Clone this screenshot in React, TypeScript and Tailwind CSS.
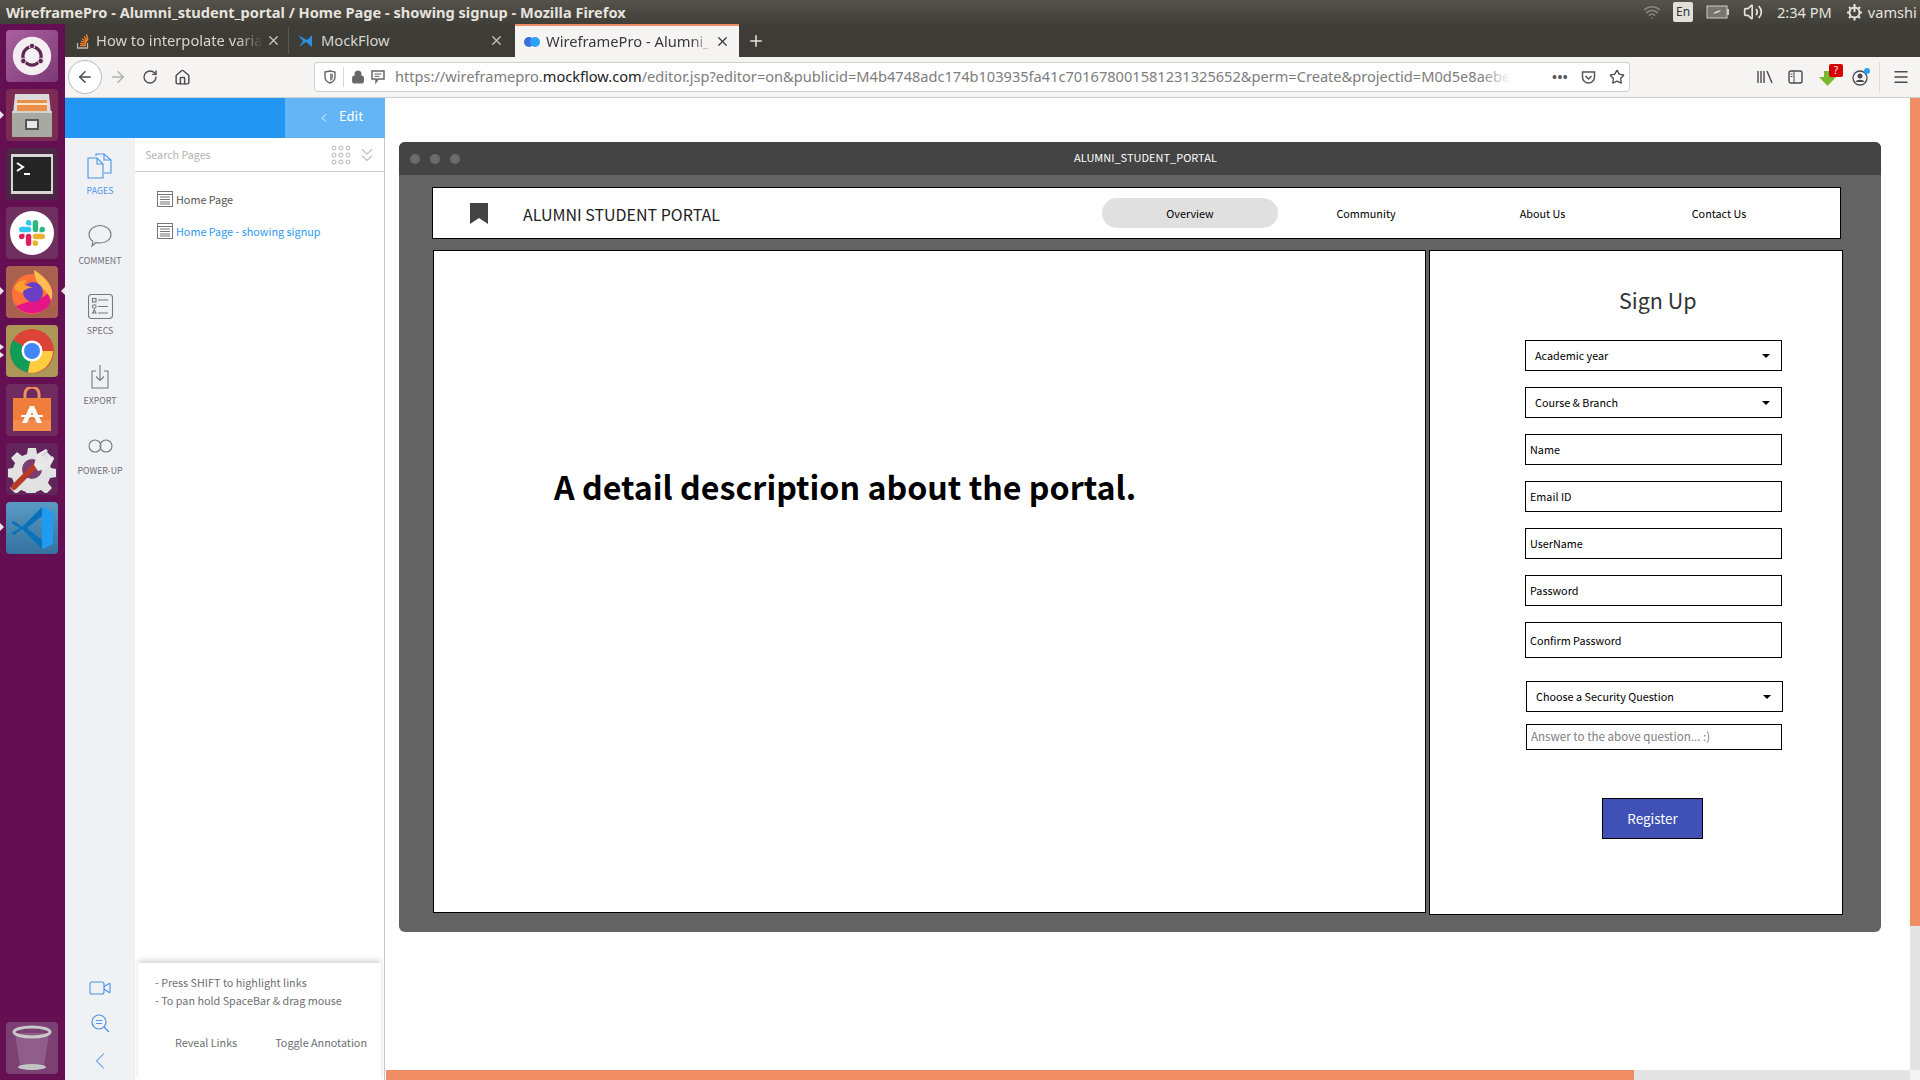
import React from 'react';
import { ArrowLeft, ArrowRight, RotateCw, Home, Lock, Star, Menu, ChevronLeft, Video, Wifi, Volume2, X, Plus, ChevronsDown } from 'lucide-react';

const Tile = ({ bg, children }: { bg: string; children: React.ReactNode }) => (
  <div className={`w-[52px] h-[52px] rounded-[4px] flex items-center justify-center ${bg}`}>{children}</div>
);

const Launcher = () => (
  <div className="relative w-[65px] shrink-0 bg-[#640f52] flex flex-col items-start pl-[6px] pt-[6px] gap-[7px]">
    <Tile bg="bg-gradient-to-br from-[#a9619f] to-[#7d3a76]">
      <svg width="42" height="42" viewBox="0 0 46 46">
        <circle cx="23" cy="23" r="21" fill="#f4eef3" />
        <circle cx="23" cy="23" r="10" fill="none" stroke="#5e2750" strokeWidth="3.5" />
        <circle cx="23" cy="12" r="3" fill="#5e2750" stroke="#f4eef3" />
        <circle cx="13.5" cy="28.5" r="3" fill="#5e2750" stroke="#f4eef3" />
        <circle cx="32.5" cy="28.5" r="3" fill="#5e2750" stroke="#f4eef3" />
      </svg>
    </Tile>
    <Tile bg="bg-[#7c2c50]">
      <svg width="42" height="46" viewBox="0 0 42 46">
        <path d="M4 2h34l2 20H2z" fill="#dadada" />
        <rect x="6" y="8" width="30" height="11" fill="#e98f4a" />
        <rect x="6" y="11" width="30" height="2" fill="#fbe6c8" />
        <rect x="1" y="19" width="40" height="26" rx="1" fill="#a9a9a4" />
        <rect x="1" y="19" width="40" height="2" fill="#d4d4d0" />
        <rect x="15" y="28" width="12" height="9" fill="#e6e6e6" stroke="#555" strokeWidth="2" />
      </svg>
    </Tile>
    <Tile bg="bg-[#4c2645]">
      <svg width="46" height="44" viewBox="0 0 46 44">
        <rect x="2" y="2" width="42" height="40" fill="#d6d6d2" />
        <rect x="4" y="5" width="38" height="34" fill="#242424" />
        <path d="M8 11l6 4-6 4" fill="none" stroke="#fff" strokeWidth="2" />
        <rect x="15" y="21" width="6" height="2" fill="#fff" />
      </svg>
    </Tile>
    <Tile bg="bg-[#70305f]">
      <svg width="46" height="46" viewBox="0 0 46 46">
        <circle cx="23" cy="23" r="22" fill="#fff" />
        <svg x="10" y="10" width="26" height="26" viewBox="0 0 24 24">
          <path fill="#e01e5a" d="M5.042 15.165a2.528 2.528 0 0 1-2.52 2.523A2.528 2.528 0 0 1 0 15.165a2.527 2.527 0 0 1 2.522-2.52h2.52v2.52zM6.313 15.165a2.527 2.527 0 0 1 2.521-2.52 2.527 2.527 0 0 1 2.521 2.52v6.313A2.528 2.528 0 0 1 8.834 24a2.528 2.528 0 0 1-2.521-2.522v-6.313z" />
          <path fill="#36c5f0" d="M8.834 5.042a2.528 2.528 0 0 1-2.521-2.52A2.528 2.528 0 0 1 8.834 0a2.528 2.528 0 0 1 2.521 2.522v2.52H8.834zM8.834 6.313a2.528 2.528 0 0 1 2.521 2.521 2.528 2.528 0 0 1-2.521 2.521H2.522A2.528 2.528 0 0 1 0 8.834a2.528 2.528 0 0 1 2.522-2.521h6.312z" />
          <path fill="#2eb67d" d="M18.956 8.834a2.528 2.528 0 0 1 2.522-2.521A2.528 2.528 0 0 1 24 8.834a2.528 2.528 0 0 1-2.522 2.521h-2.522V8.834zM17.688 8.834a2.528 2.528 0 0 1-2.523 2.521 2.527 2.527 0 0 1-2.52-2.521V2.522A2.527 2.527 0 0 1 15.165 0a2.528 2.528 0 0 1 2.523 2.522v6.312z" />
          <path fill="#ecb22e" d="M15.165 18.956a2.528 2.528 0 0 1 2.523 2.522A2.528 2.528 0 0 1 15.165 24a2.527 2.527 0 0 1-2.52-2.522v-2.522h2.52zM15.165 17.688a2.527 2.527 0 0 1-2.52-2.523 2.526 2.526 0 0 1 2.52-2.52h6.313A2.527 2.527 0 0 1 24 15.165a2.528 2.528 0 0 1-2.522 2.523h-6.313z" />
        </svg>
      </svg>
    </Tile>
    <Tile bg="bg-[#a9604f]">
      <svg width="48" height="48" viewBox="0 0 48 48">
        <circle cx="24" cy="26" r="20" fill="#ff7139" />
        <path d="M8 38c8 10 26 10 33-1 3-5 5-12 3-19-3 9-9 12-16 13z" fill="#e31587" />
        <path d="M26 2c5 3 14 9 18 20 1 4 0 8-1 11-2-9-9-12-13-17-2-4-4-9-4-14z" fill="#ffbd4f" />
        <circle cx="25" cy="24" r="10" fill="#6a3fc4" />
        <path d="M6 20c3-6 8-8 13-8-2 2-3 3-3 5 3 1 6 1 8 3-5 0-8 2-10 5-3-1-6-2-8-5z" fill="#ff9f2e" />
      </svg>
    </Tile>
    <Tile bg="bg-[#ad9757]">
      <svg width="46" height="46" viewBox="0 0 46 46">
        <circle cx="23" cy="23" r="22" fill="#db4437" />
        <path d="M23 23L4 12A22 22 0 0 0 19 44.6z" fill="#0f9d58" />
        <path d="M23 23h21A22 22 0 0 1 19 44.6L23 23z" fill="#ffcd40" />
        <circle cx="23" cy="23" r="10.5" fill="#fff" />
        <circle cx="23" cy="23" r="8" fill="#4285f4" />
      </svg>
    </Tile>
    <Tile bg="bg-[#6f2b60]">
      <svg width="42" height="46" viewBox="0 0 42 46">
        <path d="M14 12V7a5 5 0 0 1 14 0v5" fill="none" stroke="#f0905a" strokeWidth="3" />
        <rect x="2" y="11" width="38" height="33" fill="#ef7e3a" />
        <path d="M2 33h38v11H2z" fill="#f28b4c" />
        <path d="M19 19h4l8 17h-5l-5-11-5 11h-5z" fill="#fff" />
        <rect x="10" y="28" width="22" height="2" fill="#fff" />
      </svg>
    </Tile>
    <Tile bg="bg-[#63245b]">
      <svg width="48" height="48" viewBox="0 0 48 48">
        <path d="M20 3h8l1 6 5 2 5-4 6 6-4 5 2 5 5 1v8l-6 1-2 5 4 5-6 6-5-4-5 2-1 6h-8l-1-6-5-2-5 4-6-6 4-5-2-5-5-1v-8l6-1 2-5-4-5 6-6 5 4 5-2z" fill="#e2e2e2" />
        <circle cx="24" cy="24" r="10" fill="#7c3d72" />
        <path d="M6 42l24-24" stroke="#b53a28" strokeWidth="6" strokeLinecap="round" />
        <path d="M26 20l3-11 9-5 2 2-6 5 1 4 4 1 6-5 1 3-5 9-11 3z" fill="#e8e8e8" />
      </svg>
    </Tile>
    <Tile bg="bg-gradient-to-b from-[#5a9ac4] to-[#35729f]">
      <svg width="44" height="46" viewBox="0 0 44 46">
        <path d="M32 2l11 5v32l-11 5z" fill="#1f9cf0" />
        <path d="M32 2L12 22 4 16l-3 2 9 5-9 5 3 2 8-6 20 20v-9L17 23 32 11z" fill="#0a72bd" />
      </svg>
    </Tile>
    <div className="mt-auto mb-[6px]">
      <Tile bg="bg-[#7b4172]">
        <svg width="40" height="46" viewBox="0 0 40 46">
          <path d="M3 8l5 34c4 4 20 4 24 0l5-34z" fill="#8f5f8a" />
          <ellipse cx="20" cy="7" rx="18" ry="5" fill="none" stroke="#c9c9c9" strokeWidth="3" />
          <ellipse cx="20" cy="42" rx="14" ry="3" fill="#c4c4c4" />
        </svg>
      </Tile>
    </div>
    <span className="absolute left-0 top-[87px] border-y-[4px] border-y-transparent border-l-[4px] border-l-[#e6e6e6]" />
    <span className="absolute left-0 top-[263px] border-y-[4px] border-y-transparent border-l-[4px] border-l-[#e6e6e6]" />
    <span className="absolute right-0 top-[263px] border-y-[4px] border-y-transparent border-r-[4px] border-r-[#e6e6e6]" />
    <span className="absolute left-0 top-[320px] border-y-[3px] border-y-transparent border-l-[4px] border-l-[#e6e6e6]" />
    <span className="absolute left-0 top-[328px] border-y-[3px] border-y-transparent border-l-[4px] border-l-[#e6e6e6]" />
    <span className="absolute left-0 top-[499px] border-y-[4px] border-y-transparent border-l-[4px] border-l-[#e6e6e6]" />
  </div>
);

const TitleBar = () => (
  <div className="h-6 shrink-0 bg-gradient-to-b from-[#56534a] to-[#3f3e39] flex items-center [font-family:'Noto_Sans',sans-serif] text-[#e6e3de]">
    <span className="ml-[6px] w-[1629px] text-[14.6px] font-bold leading-6 whitespace-nowrap">
      WireframePro - Alumni_student_portal / Home Page - showing signup - Mozilla Firefox
    </span>
    <Wifi className="w-[18px] h-[18px] text-[#8a8882] ml-[8px]" />
    <span className="ml-[12px] w-5 h-5 bg-[#e3e0da] rounded-[2px] text-[#333] text-[12px] leading-5 text-center">En</span>
    <svg className="ml-[13px]" width="24" height="14" viewBox="0 0 24 14">
      <rect x="1" y="1" width="20" height="12" fill="#77756e" stroke="#cfccc5" />
      <rect x="21" y="4" width="2" height="6" fill="#cfccc5" />
      <path d="M7 9l6-2-1 1 3-3-6 2 1-1z" fill="#eee" />
    </svg>
    <Volume2 className="ml-[13px] w-[20px] h-[20px]" />
    <span className="ml-[14px] text-[14.6px] leading-6 whitespace-nowrap">2:34 PM</span>
    <svg className="ml-[14px]" width="17" height="18" viewBox="0 0 17 18" fill="none" stroke="#e6e3de">
      <circle cx="8.5" cy="9.5" r="5" strokeWidth="2" />
      <path d="M8.5 1v8M8.5 14.5v3M1 9.5h2M14 9.5h2M3 4l1.5 1.5M14 4l-1.5 1.5M3 15l1.5-1.5M14 15l-1.5-1.5" strokeWidth="2" />
    </svg>
    <span className="ml-[5px] text-[14.6px] leading-6">vamshi</span>
  </div>
);

const Tabs = () => (
  <div className="h-[33px] shrink-0 bg-[#3d3c37] flex items-stretch [font-family:'Noto_Sans',sans-serif] text-[14.7px] text-[#e6e3de]">
    <div className="w-[224px] flex items-center pl-[11px] pr-[9px] border-r border-[#5a5954] my-[3px]">
      <svg width="14" height="16" viewBox="0 0 14 16" className="shrink-0">
        <path d="M1.5 10v5h10v-5" fill="none" stroke="#b9b8b4" strokeWidth="1.3" />
        <path d="M4 12.5h6M4.2 10.3l5.8.6M4.8 8l5.6 1.6M6 5.7l5 3M8 3.3l3.5 4.7M10.4 1.2l1.6 5.6" stroke="#f48024" strokeWidth="1.3" />
      </svg>
      <span className="ml-[6px] flex-1 whitespace-nowrap text-[#d6d4cf] [mask-image:linear-gradient(to_right,black_85%,transparent)]">How to interpolate varia</span>
      <X className="w-[15px] h-[15px] ml-[3px] shrink-0 text-[#c9c7c2]" />
    </div>
    <div className="w-[226px] flex items-center pl-[9px] pr-[11px]">
      <svg width="16" height="16" viewBox="0 0 16 16" className="shrink-0">
        <path d="M0 2l5 6-4 6 7-5 6 5V2L9 7z" fill="#2d8fe0" />
      </svg>
      <span className="ml-[7px] flex-1 text-[#d6d4cf]">MockFlow</span>
      <X className="w-[15px] h-[15px] shrink-0 text-[#c9c7c2]" />
    </div>
    <div className="w-[224px] bg-[#f5f4f2] border-t-2 border-[#f08d65] flex items-center pl-[8px] pr-[9px] text-[#38383d]">
      <svg width="18" height="12" viewBox="0 0 18 12" className="shrink-0">
        <circle cx="6" cy="6" r="5" fill="#3b6fd8" />
        <circle cx="12" cy="6" r="5" fill="#2ea0f5" />
      </svg>
      <span className="ml-[5px] flex-1 whitespace-nowrap [mask-image:linear-gradient(to_right,black_88%,transparent)]">WireframePro - Alumni_</span>
      <X className="w-[15px] h-[15px] ml-[4px] shrink-0" />
    </div>
    <Plus className="w-[18px] h-[18px] ml-[8px] self-center text-[#e6e3de]" />
  </div>
);

const NavBar = () => (
  <div className="h-[41px] shrink-0 bg-[#f5f4f2] border-b border-[#cfcfcd] flex items-center text-[#4a4a4f] [font-family:'Noto_Sans',sans-serif]">
    <div className="ml-[3px] w-[34px] h-[34px] rounded-full bg-white border border-[#b9b9b9] flex items-center justify-center">
      <ArrowLeft className="w-[18px] h-[18px]" />
    </div>
    <ArrowRight className="ml-[7px] w-[18px] h-[18px] text-[#b1b1b1]" />
    <RotateCw className="ml-[15px] w-[16px] h-[16px]" />
    <Home className="ml-[16px] w-[17px] h-[17px]" />
    <div className="relative ml-[123px] w-[1316px] h-[30px] bg-white border border-[#cfcfcd] rounded-[3px] flex items-center overflow-hidden">
      <svg className="ml-[9px] shrink-0" width="12" height="14" viewBox="0 0 12 14">
        <path d="M1 2l5-1 5 1v5c0 3-2 5-5 6-3-1-5-3-5-6z" fill="none" stroke="#666" strokeWidth="1.4" />
        <path d="M6 3.5l3 .6v3c0 2-1 3-3 4z" fill="#888" />
      </svg>
      <span className="ml-[7px] h-5 border-l border-[#d8d8d8]" />
      <Lock className="ml-[7px] w-[14px] h-[14px] shrink-0 fill-[#666] text-[#666]" />
      <svg className="ml-[6px] shrink-0" width="14" height="14" viewBox="0 0 14 14">
        <path d="M1 1h12v8H7l-2 3V9H1z" fill="none" stroke="#666" strokeWidth="1.5" />
        <path d="M3.5 4h7M3.5 6.3h5" stroke="#666" />
      </svg>
      <span className="ml-[10px] w-[1115px] whitespace-nowrap text-[14.6px] text-[#7d7d7d]">
        https://wireframepro.<span className="text-[#222]">mockflow.com</span>/editor.jsp?editor=on&amp;publicid=M4b4748adc174b103935fa41c701678001581231325652&amp;perm=Create&amp;projectid=M0d5e8aebe
      </span>
      <span className="absolute left-[1166px] top-0 h-full w-[30px] bg-gradient-to-r from-transparent to-white" />
      <span className="ml-[42px] text-[13px] font-bold leading-none tracking-[0.5px] text-[#555]">•••</span>
      <svg className="ml-[13px] shrink-0" width="15" height="15" viewBox="0 0 15 15">
        <path d="M1.5 2h12v5a6 6 0 0 1-12 0z" fill="none" stroke="#555" strokeWidth="1.5" />
        <path d="M4.5 6l3 3 3-3" fill="none" stroke="#555" strokeWidth="1.5" />
      </svg>
      <Star className="ml-[13px] w-[16px] h-[16px] shrink-0" />
    </div>
    <svg className="ml-[127px]" width="16" height="14" viewBox="0 0 16 14">
      <path d="M1 1v12M4 1v12M7 1v12M10 1l5 12" stroke="#4a4a4f" strokeWidth="1.4" />
    </svg>
    <svg className="ml-[15px]" width="15" height="14" viewBox="0 0 15 14">
      <rect x="1" y="1" width="13" height="12" rx="2" fill="none" stroke="#4a4a4f" strokeWidth="1.4" />
      <path d="M6 1v12M2.5 4h2M2.5 6.5h2" stroke="#4a4a4f" />
    </svg>
    <div className="relative ml-[16px] w-[20px] h-[22px]">
      <svg width="18" height="22" viewBox="0 0 18 22">
        <path d="M5 5h7v6h5l-8.5 9L0 11h5z" fill="#7cb82f" />
      </svg>
      <span className="absolute -top-[2px] left-[10px] w-[14px] h-[13px] bg-[#d60000] rounded-[2px] text-white text-[10px] leading-[13px] text-center">?</span>
    </div>
    <svg className="ml-[13px]" width="18" height="18" viewBox="0 0 18 18">
      <circle cx="8" cy="10" r="7" fill="none" stroke="#4a4a4f" strokeWidth="1.3" />
      <circle cx="8" cy="8" r="2.5" fill="#4a4a4f" />
      <path d="M3.5 14c1-3 8-3 9 0z" fill="#4a4a4f" />
      <circle cx="15" cy="3" r="3" fill="#2ea0f5" />
    </svg>
    <span className="ml-[9px] h-[30px] border-l border-[#dcdcda]" />
    <Menu className="ml-[12px] w-[18px] h-[18px]" />
  </div>
);

const RailItem = ({ label, active, children }: { label: string; active?: boolean; children: React.ReactNode }) => (
  <div className={`h-[70px] flex flex-col items-center ${active ? 'text-[#4a94e8]' : 'text-[#6f6f75]'}`}>
    <div className="h-[26px] flex items-center justify-center">{children}</div>
    <span className="mt-[5px] text-[8.8px] leading-[14px]">{label}</span>
  </div>
);

const IconRail = () => (
  <div className="w-[70px] shrink-0 bg-[#eff1f5] flex flex-col items-center pt-[15px]">
    <RailItem label="PAGES" active>
      <svg width="25" height="26" viewBox="0 0 25 26" fill="none" stroke="#4a94e8" strokeWidth="1.1">
        <path d="M9 3V1h8l7 6v13h-7" />
        <path d="M17 1v6h7" />
        <path d="M1 5h9l6 6v14H1z" fill="#eff1f5" />
        <path d="M10 5v6h6" />
      </svg>
    </RailItem>
    <RailItem label="COMMENT">
      <svg width="24" height="24" viewBox="0 0 24 24" fill="none" stroke="#77777c" strokeWidth="1.1">
        <path d="M12 1.5c6 0 11 4 11 9s-5 8.5-11 8.5c-1.5 0-3 0-4-.5L4 22l1-4.5C2.5 15.5 1 13 1 10.5c0-5 5-9 11-9z" />
      </svg>
    </RailItem>
    <RailItem label="SPECS">
      <svg width="25" height="25" viewBox="0 0 25 25" fill="none" stroke="#77777c" strokeWidth="1.1">
        <rect x="0.5" y="0.5" width="24" height="24" rx="3" />
        <rect x="4.5" y="4.5" width="3.5" height="3.5" />
        <circle cx="6.3" cy="12.5" r="1.8" />
        <path d="M4.5 19h3.5l-1.7-3.2z" />
        <path d="M10 6h10M10 12.5h10M10 19h10" />
      </svg>
    </RailItem>
    <RailItem label="EXPORT">
      <svg width="18" height="25" viewBox="0 0 18 25" fill="none" stroke="#77777c" strokeWidth="1.1">
        <path d="M5 7H1v17h16V7h-4" />
        <path d="M9 1v15M5 12.5l4 4 4-4" />
      </svg>
    </RailItem>
    <RailItem label="POWER-UP">
      <svg width="25" height="14" viewBox="0 0 25 14" fill="none" stroke="#77777c" strokeWidth="1.1">
        <circle cx="7" cy="7" r="6" />
        <circle cx="18" cy="7" r="6" />
      </svg>
    </RailItem>
    <Video className="mt-auto w-[24px] h-[24px] text-[#4a94e8]" strokeWidth={1.1} />
    <svg className="mt-[14px]" width="19" height="19" viewBox="0 0 19 19" fill="none" stroke="#4a94e8" strokeWidth="1.2">
      <circle cx="8" cy="8" r="7" />
      <path d="M5 6.5h6M5 9.5h6M13 13l5 5" />
    </svg>
    <ChevronLeft className="mt-[14px] mb-[5px] w-[28px] h-[28px] text-[#4a94e8]" strokeWidth={0.9} />
  </div>
);

const PageRow = ({ label, active }: { label: string; active?: boolean }) => (
  <div className={`h-8 flex items-center ml-[22px] text-[10.8px] ${active ? 'text-[#2d9bf0]' : 'text-[#555]'}`}>
    <svg className="mr-[3px] shrink-0" width="16" height="16" viewBox="0 0 16 16" fill="none" stroke="#777">
      <rect x="0.5" y="0.5" width="15" height="15" />
      <path d="M1 3.5h14M3 6h10M3 8.5h10M3 11h10M3 13h10" />
    </svg>
    {label}
  </div>
);

const PagesPanel = () => (
  <div className="w-[250px] shrink-0 bg-white border-r border-[#c9c9c9] flex flex-col">
    <div className="h-[34px] shrink-0 border-b border-[#d0d0d0] flex items-center pl-[10px] text-[10.7px] text-[#b3b3b3]">
      <span className="w-[186px] mt-[2px]">Search Pages</span>
      <svg width="20" height="20" viewBox="0 0 20 20" fill="none" stroke="#b5b5b5">
        <circle cx="3" cy="3" r="2" /><circle cx="10" cy="3" r="2" /><circle cx="17" cy="3" r="2" />
        <circle cx="3" cy="10" r="2" /><circle cx="10" cy="10" r="2" /><circle cx="17" cy="10" r="2" />
        <circle cx="3" cy="17" r="2" /><circle cx="10" cy="17" r="2" /><circle cx="17" cy="17" r="2" />
      </svg>
      <ChevronsDown className="ml-[5px] w-[22px] h-[22px] text-[#c4c4c4]" strokeWidth={1.5} />
    </div>
    <div className="pt-[11px]">
      <PageRow label="Home Page" />
      <PageRow label="Home Page - showing signup" active />
    </div>
    <div className="mt-auto h-[117px] mx-[3px] shadow-[0_-3px_5px_rgba(0,0,0,0.15)] text-[10.8px] text-[#6f6f75] bg-white">
      <p className="pl-[17px] pt-[10px] leading-[18px]">- Press SHIFT to highlight links</p>
      <p className="pl-[17px] leading-[18px]">- To pan hold SpaceBar &amp; drag mouse</p>
      <div className="flex mt-[24px] leading-[18px] whitespace-nowrap">
        <span className="ml-[37px]">Reveal Links</span>
        <span className="ml-[38px]">Toggle Annotation</span>
      </div>
    </div>
  </div>
);

const Editor = () => (
  <div className="w-[320px] shrink-0 flex flex-col [font-family:'Noto_Sans_CJK_SC',sans-serif]">
    <div className="h-10 shrink-0 bg-[#2196f3] flex justify-end">
      <div className="w-[100px] bg-[#64b5f6] flex items-center pb-[4px] text-white text-[13px]">
        <ChevronLeft className="ml-[32px] w-[14px] h-[14px] mt-[3px]" strokeWidth={1.5} />
        <span className="ml-[8px]">Edit</span>
      </div>
    </div>
    <div className="flex-1 flex min-h-0">
      <IconRail />
      <PagesPanel />
    </div>
  </div>
);

const Caret = () => (
  <span className="border-x-[4.5px] border-x-transparent border-t-[4.5px] border-t-black" />
);

const Select = ({ label, className }: { label: string; className: string }) => (
  <div className={`w-[257px] h-[31px] border border-black flex items-center justify-between pl-[9px] pr-[11px] text-[10.8px] text-black ${className}`}>
    {label}
    <Caret />
  </div>
);

const Field = ({ label, className }: { label: string; className: string }) => (
  <div className={`w-[257px] border border-black flex items-center pl-[4px] text-[10.8px] text-black ${className}`}>
    {label}
  </div>
);

const SignUp = () => (
  <div className="w-[414px] h-[665px] shrink-0 bg-white border border-black flex flex-col pl-[95px]">
    <h2 className="w-[257px] pl-[94px] mt-[31px] text-[21.5px] leading-[36px] text-[#333] whitespace-nowrap">Sign Up</h2>
    <Select label="Academic year" className="mt-[22px]" />
    <Select label="Course & Branch" className="mt-4" />
    <Field label="Name" className="mt-4 h-[31px]" />
    <Field label="Email ID" className="mt-4 h-[31px]" />
    <Field label="UserName" className="mt-4 h-[31px]" />
    <Field label="Password" className="mt-4 h-[31px]" />
    <Field label="Confirm Password" className="mt-4 h-[36px]" />
    <div className="ml-[1px] flex flex-col">
      <Select label="Choose a Security Question" className="mt-[23px]" />
      <div className="mt-[12px] w-[256px] h-[26px] border border-black flex items-center pl-[4px] text-[11.6px] text-[#808080]">
        Answer to the above question... :)
      </div>
      <button className="mt-[48px] ml-[76px] w-[101px] h-[41px] bg-[#3f51b5] border border-black text-white text-[13.4px]">Register</button>
    </div>
  </div>
);

const Wireframe = () => (
  <div className="w-[1482px] h-[790px] bg-[#636363] rounded-[6px] overflow-hidden flex flex-col">
    <div className="h-[33px] shrink-0 bg-[#444] flex items-center pl-[11px] gap-[10px]">
      <span className="w-[10px] h-[10px] rounded-full bg-[#6b6b6b]" />
      <span className="w-[10px] h-[10px] rounded-full bg-[#6b6b6b]" />
      <span className="w-[10px] h-[10px] rounded-full bg-[#6b6b6b]" />
      <span className="flex-1 text-center text-white text-[11px] pr-[60px] pb-[2px]">ALUMNI_STUDENT_PORTAL</span>
    </div>
    <div className="flex-1 pl-[33px] pt-[12px]">
      <div className="w-[1409px] h-[52px] bg-white border border-black flex items-center">
        <svg className="ml-[37px] shrink-0" width="18" height="21" viewBox="0 0 18 21">
          <path d="M0 0h18v21l-9-6-9 6z" fill="#444" />
        </svg>
        <span className="ml-[35px] mt-[2px] w-[579px] text-[16px] text-[#222]">ALUMNI STUDENT PORTAL</span>
        <div className="w-[176px] h-[30px] rounded-full bg-[#e0e0e0] flex items-center justify-center text-[10.8px] text-black">Overview</div>
        <div className="w-[176px] text-center text-[10.8px] text-black">Community</div>
        <div className="w-[177px] text-center text-[10.8px] text-black">About Us</div>
        <div className="w-[176px] text-center text-[10.8px] text-black">Contact Us</div>
      </div>
      <div className="mt-[11px] flex items-start gap-[3px] pl-[1px]">
        <div className="w-[993px] h-[663px] bg-white border border-black pl-[120px] pt-[211px]">
          <p className="text-[32.2px] leading-[48px] font-bold text-black whitespace-nowrap">A detail description about the portal.</p>
        </div>
        <SignUp />
      </div>
    </div>
  </div>
);

export default function App() {
  return (
    <div className="w-[1920px] h-[1080px] overflow-hidden flex flex-col bg-white">
      <TitleBar />
      <div className="flex-1 flex min-h-0">
        <Launcher />
        <div className="flex-1 flex flex-col min-w-0">
          <Tabs />
          <NavBar />
          <div className="flex-1 flex min-h-0">
            <Editor />
            <div className="flex-1 flex flex-col min-w-0 [font-family:'Noto_Sans_CJK_SC',sans-serif]">
              <div className="flex-1 pl-[14px] pt-[44px]">
                <Wireframe />
              </div>
              <div className="h-[10px] shrink-0 ml-[1px] bg-[#e4e4e4]">
                <div className="w-[1248px] h-full bg-[#f08d65]" />
              </div>
            </div>
            <div className="w-[10px] shrink-0 flex flex-col bg-[#e4e4e4]">
              <div className="h-[828px] bg-[#f08d65]" />
              <div className="flex-1" />
              <div className="h-[10px] bg-[#f4f4f4]" />
            </div>
          </div>
        </div>
      </div>
    </div>
  );
}
